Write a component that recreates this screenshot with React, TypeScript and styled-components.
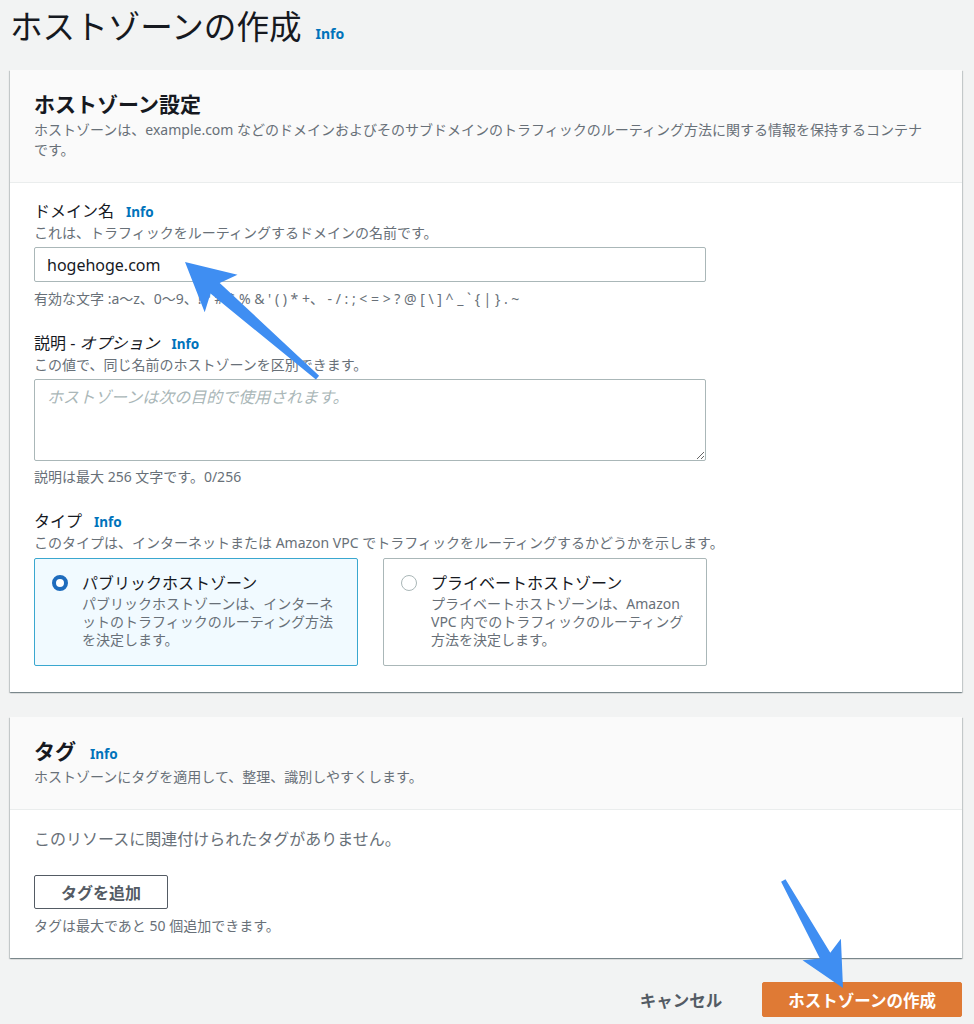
import React from 'react';
import styled, { createGlobalStyle } from 'styled-components';

const GlobalStyle = createGlobalStyle`
  html, body {
    margin: 0;
    padding: 0;
    background: #f2f3f3;
  }
  body {
    font-family: "Noto Sans", "Noto Sans CJK JP", sans-serif;
    color: #16191f;
  }
  * {
    box-sizing: border-box;
  }
`;

const Page = styled.div`
  position: relative;
  width: 974px;
  min-height: 1024px;
  padding: 7px 12px 0 10px;
`;

const PageHeader = styled.div`
  display: flex;
  align-items: baseline;
  gap: 14px;
  margin-bottom: 23px;
`;

const PageTitle = styled.h1`
  margin: 0;
  font-size: 32.6px;
  line-height: 40px;
  font-weight: 400;
  color: #16191f;
`;

const InfoLink = styled.a<{ size?: number }>`
  font-size: ${({ size }) => size ?? 13.5}px;
  font-weight: 700;
  color: #0073bb;
  text-decoration: none;
  cursor: pointer;
`;

const Card = styled.section`
  background: #fff;
  box-shadow: 0 1px 1px 0 rgba(0, 28, 36, 0.3), 1px 1px 1px 0 rgba(0, 28, 36, 0.15),
    -1px 1px 1px 0 rgba(0, 28, 36, 0.15);
  margin-bottom: 25px;
`;

const CardHeader = styled.div`
  background: #fafafa;
  border-bottom: 1px solid #eaeded;
  padding: 20px 24px 22px;
`;

const CardTitleRow = styled.div`
  display: flex;
  align-items: baseline;
  gap: 14px;
`;

const CardTitle = styled.h2`
  margin: 0;
  font-size: 21px;
  line-height: 28px;
  font-weight: 700;
`;

const CardDescription = styled.p`
  margin: 2px 0 0;
  max-width: 895px;
  font-size: 14px;
  line-height: 20px;
  color: #687078;
`;

const CardBody = styled.div<{ bottom?: number }>`
  padding: 17px 24px ${({ bottom }) => bottom ?? 24}px;
`;

const Field = styled.div`
  margin-bottom: 24px;
  &:last-child {
    margin-bottom: 0;
  }
`;

const LabelRow = styled.div`
  display: flex;
  align-items: baseline;
  gap: 12px;
  font-size: 16px;
  line-height: 22px;
`;

const Label = styled.label`
  font-size: 16px;
  color: #16191f;
  em {
    font-style: italic;
  }
`;

const FieldDescription = styled.div`
  font-size: 14px;
  line-height: 20px;
  color: #687078;
  margin-bottom: 4px;
`;

const Constraint = styled.div<{ gap?: number }>`
  font-size: 14px;
  line-height: 18px;
  color: #687078;
  margin-top: ${({ gap }) => gap ?? 8}px;
  white-space: nowrap;
`;

const TextInput = styled.input`
  display: block;
  width: 672px;
  height: 35px;
  padding: 0 12px;
  border: 1px solid #aab7b8;
  border-radius: 2px;
  font-family: "Noto Sans", "Noto Sans CJK JP", sans-serif;
  font-size: 16px;
  color: #16191f;
  background: #fff;
  outline: none;
`;

const TextArea = styled.textarea`
  display: block;
  width: 672px;
  height: 82px;
  padding: 6px 12px;
  border: 1px solid #aab7b8;
  border-radius: 2px;
  font-family: "Noto Sans", "Noto Sans CJK JP", sans-serif;
  font-size: 16px;
  line-height: 22px;
  color: #16191f;
  outline: none;
  resize: both;
  &::placeholder {
    color: #aab7b8;
    font-style: italic;
  }
`;

const RadioGroup = styled.div`
  display: grid;
  grid-template-columns: 324px 324px;
  gap: 25px;
  padding-top: 1px;
`;

const RadioCard = styled.div<{ selected?: boolean }>`
  display: flex;
  align-items: flex-start;
  gap: 14px;
  height: 108px;
  padding: 12px 17px 16px;
  border: 1px solid ${({ selected }) => (selected ? '#3aa7cf' : '#aab7b8')};
  border-radius: 2px;
  background: ${({ selected }) => (selected ? '#f1faff' : '#fff')};
  cursor: pointer;
`;

const RadioDot = styled.span<{ checked?: boolean }>`
  flex: none;
  width: 16px;
  height: 16px;
  margin-top: 4px;
  border-radius: 50%;
  background: #fff;
  border: ${({ checked }) => (checked ? '4.5px solid #1f6cbd' : '1.5px solid #aab7b8')};
`;

const RadioText = styled.div`
  flex: 1;
`;

const RadioTitle = styled.div`
  font-size: 16px;
  line-height: 24px;
  color: #16191f;
`;

const RadioDescription = styled.div`
  font-size: 14px;
  line-height: 18px;
  color: #687078;
`;

const EmptyText = styled.div`
  font-size: 16px;
  line-height: 24px;
  color: #687078;
  margin-bottom: 24px;
`;

const Button = styled.button<{ variant?: 'normal' | 'primary' | 'link' }>`
  font-family: "Noto Sans", "Noto Sans CJK JP", sans-serif;
  font-size: 16px;
  font-weight: 700;
  height: 35px;
  border-radius: 2px;
  cursor: pointer;
  ${({ variant }) =>
    variant === 'primary'
      ? `
    background: #df7a35;
    border: 1px solid #df7a35;
    color: #fff;
    font-size: 16.5px;
    padding: 0 25px;
  `
      : variant === 'link'
      ? `
    background: transparent;
    border: 1px solid transparent;
    color: #545b64;
    font-size: 16.5px;
    padding: 0 20px;
  `
      : `
    background: #fff;
    border: 1px solid #545b64;
    color: #545b64;
    padding: 0 26px;
    height: 34px;
  `}
`;

const Hint = styled.div`
  font-size: 14px;
  line-height: 18px;
  color: #687078;
  margin-top: 8px;
`;

const Footer = styled.div`
  display: flex;
  justify-content: flex-end;
  align-items: center;
  gap: 19px;
  margin-top: -1px;
`;

const Overlay = styled.svg`
  position: absolute;
  top: 0;
  left: 0;
  pointer-events: none;
`;

export default function App() {
  return (
    <>
      <GlobalStyle />
      <Page>
        <PageHeader>
          <PageTitle>ホストゾーンの作成</PageTitle>
          <InfoLink size={14}>Info</InfoLink>
        </PageHeader>

        <Card>
          <CardHeader>
            <CardTitle>ホストゾーン設定</CardTitle>
            <CardDescription>
              ホストゾーンは、example.com などのドメインおよびそのサブドメインのトラフィックのルーティング方法に関する情報を保持するコンテナです。
            </CardDescription>
          </CardHeader>
          <CardBody bottom={26}>
            <Field>
              <LabelRow>
                <Label>ドメイン名</Label>
                <InfoLink>Info</InfoLink>
              </LabelRow>
              <FieldDescription>これは、トラフィックをルーティングするドメインの名前です。</FieldDescription>
              <TextInput value="hogehoge.com" readOnly />
              <Constraint>
                有効な文字 :a〜z、0〜9、! " # $ % & ' ( ) * +、 - / : ; &lt; = &gt; ? @ [ \ ] ^ _ ` {'{'} | {'}'} . ~
              </Constraint>
            </Field>

            <Field>
              <LabelRow>
                <Label>
                  説明 - <em>オプション</em>
                </Label>
                <InfoLink>Info</InfoLink>
              </LabelRow>
              <FieldDescription>この値で、同じ名前のホストゾーンを区別できます。</FieldDescription>
              <TextArea placeholder="ホストゾーンは次の目的で使用されます。" />
              <Constraint gap={7}>説明は最大 256 文字です。0/256</Constraint>
            </Field>

            <Field>
              <LabelRow>
                <Label>タイプ</Label>
                <InfoLink>Info</InfoLink>
              </LabelRow>
              <FieldDescription>
                このタイプは、インターネットまたは Amazon VPC でトラフィックをルーティングするかどうかを示します。
              </FieldDescription>
              <RadioGroup>
                <RadioCard selected>
                  <RadioDot checked />
                  <RadioText>
                    <RadioTitle>パブリックホストゾーン</RadioTitle>
                    <RadioDescription>
                      パブリックホストゾーンは、インターネットのトラフィックのルーティング方法を決定します。
                    </RadioDescription>
                  </RadioText>
                </RadioCard>
                <RadioCard>
                  <RadioDot />
                  <RadioText>
                    <RadioTitle>プライベートホストゾーン</RadioTitle>
                    <RadioDescription>
                      プライベートホストゾーンは、Amazon VPC 内でのトラフィックのルーティング方法を決定します。
                    </RadioDescription>
                  </RadioText>
                </RadioCard>
              </RadioGroup>
            </Field>
          </CardBody>
        </Card>

        <Card>
          <CardHeader>
            <CardTitleRow>
              <CardTitle>タグ</CardTitle>
              <InfoLink>Info</InfoLink>
            </CardTitleRow>
            <CardDescription>ホストゾーンにタグを適用して、整理、識別しやすくします。</CardDescription>
          </CardHeader>
          <CardBody bottom={23}>
            <EmptyText>このリソースに関連付けられたタグがありません。</EmptyText>
            <Button>タグを追加</Button>
            <Hint>タグは最大であと 50 個追加できます。</Hint>
          </CardBody>
        </Card>

        <Footer>
          <Button variant="link">キャンセル</Button>
          <Button variant="primary">ホストゾーンの作成</Button>
        </Footer>

        <Overlay width="974" height="1024" viewBox="0 0 974 1024">
          <polygon
            fill="#3f8ef2"
            points="185,262 237.5,274.7 219.7,283 319.1,375.7 315.9,379.5 210.5,293.6 204.7,312.3"
          />
          <polygon
            fill="#3f8ef2"
            points="843,988 802.5,960.2 819.9,958.6 781.1,881.7 785.5,879.3 830.3,952.8 840.9,938.8"
          />
        </Overlay>
      </Page>
    </>
  );
}
